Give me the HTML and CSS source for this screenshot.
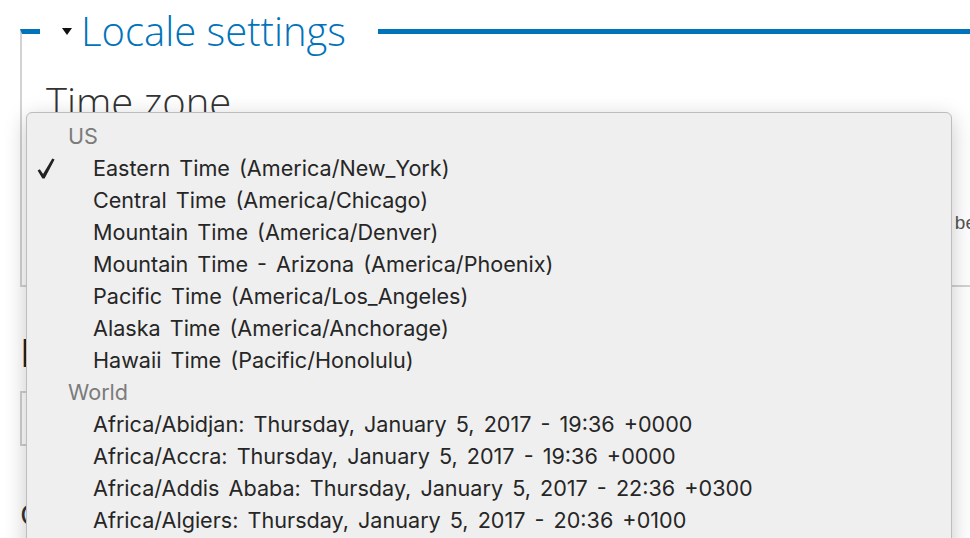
FILE: index.html
```html
<!DOCTYPE html>
<html lang="en">
<head>
<meta charset="utf-8">
<title>Locale settings</title>
<link rel="stylesheet" href="styles.css">
</head>
<body>
<div class="page">
  <fieldset class="locale">
    <legend class="legend"><span class="caret"></span>Locale settings</legend>
    <div class="label">Time zone</div>
    <div class="select-box"></div>
    <p class="desc">Dates and times will be</p>
  </fieldset>
  <div class="label-dark">First day of week</div>
  <div class="input-box"></div>
  <div class="label-small">Country</div>
</div>

<div class="menu">
  <div class="group">US</div>
  <div class="item"><span class="check"><svg width="18" height="21" viewBox="0 0 18 21"><path d="M0.6 12.6 L2.8 11.2 L6.1 15.9 L15.3 0.6 L17.6 1.6 L7.6 20.4 L5.4 20.4 Z" fill="#222"/></svg></span><span>Eastern Time (America/New_York)</span></div>
  <div class="item"><span class="check"></span><span>Central Time (America/Chicago)</span></div>
  <div class="item"><span class="check"></span><span>Mountain Time (America/Denver)</span></div>
  <div class="item"><span class="check"></span><span>Mountain Time - Arizona (America/Phoenix)</span></div>
  <div class="item"><span class="check"></span><span>Pacific Time (America/Los_Angeles)</span></div>
  <div class="item"><span class="check"></span><span>Alaska Time (America/Anchorage)</span></div>
  <div class="item"><span class="check"></span><span>Hawaii Time (Pacific/Honolulu)</span></div>
  <div class="group">World</div>
  <div class="item"><span class="check"></span><span>Africa/Abidjan: Thursday, January 5, 2017 - 19:36 +0000</span></div>
  <div class="item"><span class="check"></span><span>Africa/Accra: Thursday, January 5, 2017 - 19:36 +0000</span></div>
  <div class="item"><span class="check"></span><span>Africa/Addis Ababa: Thursday, January 5, 2017 - 22:36 +0300</span></div>
  <div class="item"><span class="check"></span><span>Africa/Algiers: Thursday, January 5, 2017 - 20:36 +0100</span></div>
  <div class="item"><span class="check"></span><span>Africa/Asmara: Thursday, January 5, 2017 - 22:36 +0300</span></div>
</div>
</body>
</html>
```
FILE: styles.css
```css
html, body {
  margin: 0;
  padding: 0;
  background: #ffffff;
  overflow: hidden;
  height: 538px;
}

body {
  font-family: "Open Sans", "Liberation Sans", sans-serif;
  color: #333;
}

.page {
  padding: 6px 0 0 20px;
  width: 1100px;
}

.locale {
  margin: 0;
  padding: 20px 24px 50px 24px;
  border: none;
  border-top: 5px solid #0073ba;
  border-left: 2px solid #d2d2d2;
  border-bottom: 2px solid #d2d2d2;
  min-width: 0;
}

.legend {
  margin-left: -6px;
  padding: 0 32px 0 22px;
  font-family: "Open Sans", sans-serif;
  font-weight: 300;
  font-size: 40px;
  line-height: 50px;
  color: #0073ba;
}

.caret {
  display: inline-block;
  width: 0;
  height: 0;
  border-left: 5.5px solid transparent;
  border-right: 5.5px solid transparent;
  border-top: 7px solid #111;
  margin-right: 9px;
  vertical-align: 11px;
}

.label {
  font-family: "Open Sans", sans-serif;
  font-weight: 300;
  font-size: 40px;
  line-height: 52px;
  color: #333;
}

.select-box {
  width: 400px;
  height: 48px;
  border: 1px solid #ccc;
  box-sizing: border-box;
}

.desc {
  width: 930px;
  margin: 35px 0 0 0;
  text-align: right;
  font-family: "Liberation Sans", sans-serif;
  font-size: 19px;
  line-height: 24px;
  color: #555;
}

.label-dark {
  margin-top: 39px;
  font-family: "Open Sans", sans-serif;
  font-weight: 400;
  font-size: 38px;
  line-height: 52px;
  color: #222;
}

.input-box {
  margin-top: 13px;
  width: 500px;
  height: 55px;
  box-sizing: border-box;
  border: 2px solid #cfcfcf;
}

.label-small {
  margin-top: 48px;
  font-family: "Open Sans", sans-serif;
  font-size: 30px;
  line-height: 40px;
  color: #333;
}

.menu {
  position: absolute;
  left: 26px;
  top: 112px;
  width: 926px;
  height: 470px;
  box-sizing: border-box;
  padding-top: 7px;
  background: #efefef;
  border: 1px solid #bdbdbd;
  border-radius: 6px;
  box-shadow: 0 6px 22px rgba(0, 0, 0, 0.22);
  font-family: "Inter", "Liberation Sans", sans-serif;
  font-size: 21.6px;
  word-spacing: 3px;
  line-height: 32px;
  overflow: hidden;
}

.group {
  padding-left: 41px;
  color: #7b7b7b;
  height: 32px;
}

.item {
  display: flex;
  align-items: center;
  height: 32px;
  padding-left: 10px;
  color: #262626;
  white-space: nowrap;
}

.check {
  display: flex;
  align-items: center;
  width: 56px;
  height: 32px;
  flex: none;
}
```
